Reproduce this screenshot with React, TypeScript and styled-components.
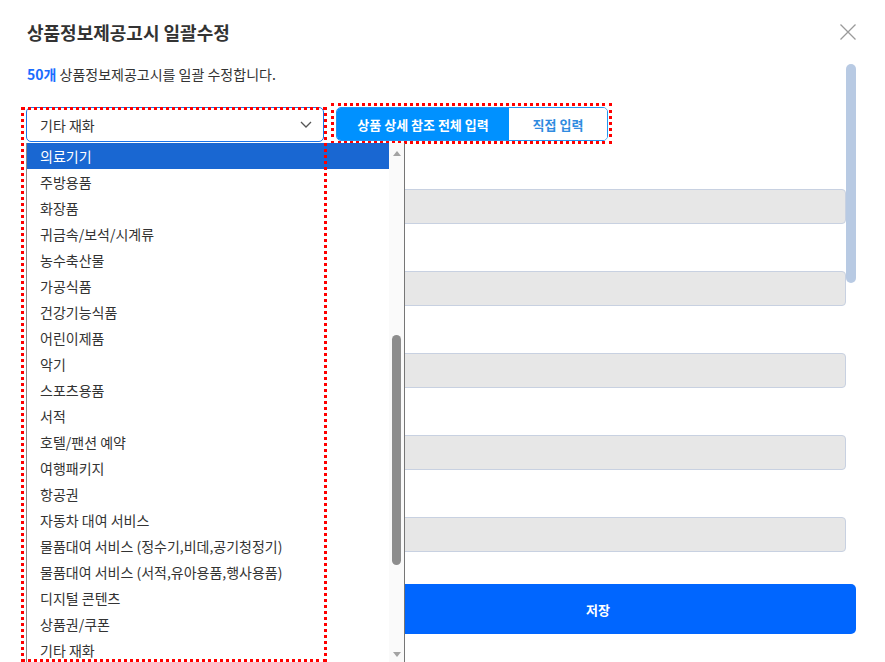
import React from "react";
import styled, { createGlobalStyle } from "styled-components";

const GlobalStyle = createGlobalStyle`
  html, body { margin: 0; padding: 0; background: #fff; }
  body { font-family: "Noto Sans CJK KR", "Noto Sans", sans-serif; color: #333; }
  * { box-sizing: border-box; }
`;

const Modal = styled.div`
  position: relative;
  width: 885px;
  height: 662px;
  overflow: hidden;
  padding: 20px 29px 0 26px;
  background: #fff;
`;

const Header = styled.div`
  display: flex;
  justify-content: space-between;
  align-items: center;
  height: 24px;
`;

const Title = styled.h2`
  margin: 0 0 0 1px;
  font-size: 18px;
  line-height: 24px;
  font-weight: 700;
  color: #333;
`;

const CloseButton = styled.button`
  display: flex;
  padding: 0;
  border: 0;
  background: none;
  cursor: pointer;
`;

const Subtitle = styled.p`
  margin: 20px 0 0 1px;
  font-size: 14px;
  line-height: 20px;
  color: #333;
`;

const Count = styled.strong`
  color: #1a6dff;
  font-weight: 700;
`;

const ControlRow = styled.div`
  display: flex;
  align-items: flex-start;
  gap: 7px;
  margin-top: 19px;
`;

const SelectWrap = styled.div`
  position: relative;
  width: 298px;
  margin-top: 4px;
`;

const SelectBox = styled.div`
  display: flex;
  align-items: center;
  justify-content: space-between;
  height: 35px;
  padding: 0 11px 0 13px;
  border: 1px solid #1a73e8;
  border-radius: 5px;
  font-size: 14px;
  color: #333;
  background: #fff;
`;

const DropdownList = styled.div`
  position: absolute;
  top: 36px;
  left: 0;
  width: 379px;
  height: 520px;
  display: flex;
  background: #fff;
  border-left: 1px solid #8a8a8a;
  border-right: 1px solid #767676;
  z-index: 2;
`;

const Options = styled.ul`
  flex: 1;
  margin: 0;
  padding: 0;
  list-style: none;
`;

const Option = styled.li<{ $selected?: boolean }>`
  height: 26px;
  line-height: 26px;
  padding-left: 13px;
  font-size: 14px;
  white-space: nowrap;
  color: ${(p) => (p.$selected ? "#fff" : "#333")};
  background: ${(p) => (p.$selected ? "#1967d2" : "transparent")};
`;

const ScrollTrack = styled.div`
  width: 15px;
  display: flex;
  flex-direction: column;
  align-items: center;
  background: #fafafa;
  padding: 8px 0 6px;
`;

const ArrowUp = styled.span`
  width: 0;
  height: 0;
  border-left: 4.5px solid transparent;
  border-right: 4.5px solid transparent;
  border-bottom: 5px solid #a3a3a3;
`;

const ArrowDown = styled.span`
  width: 0;
  height: 0;
  margin-top: auto;
  border-left: 4.5px solid transparent;
  border-right: 4.5px solid transparent;
  border-top: 5px solid #a3a3a3;
`;

const Thumb = styled.span`
  width: 9px;
  height: 230px;
  margin-top: 179px;
  border-radius: 5px;
  background: #8d8d8d;
`;

const Highlight = styled.div`
  position: absolute;
  top: 0;
  left: -5px;
  width: 306px;
  height: 555px;
  border: 3px dotted #f00;
  pointer-events: none;
  z-index: 3;
`;

const ToggleHighlight = styled.div`
  border: 3px dotted #f00;
  padding: 1px 1px 0 2px;
`;

const ToggleGroup = styled.div`
  display: flex;
  height: 34px;
  border: 1px solid #2196f3;
  border-radius: 5px;
  overflow: hidden;
`;

const ToggleButton = styled.button<{ $active?: boolean; $w: number }>`
  width: ${(p) => p.$w}px;
  border: 0;
  padding: 0;
  font-family: inherit;
  font-size: 13px;
  font-weight: 700;
  color: ${(p) => (p.$active ? "#fff" : "#2f8be0")};
  background: ${(p) => (p.$active ? "#0091ff" : "#fff")};
  cursor: pointer;
`;

const FormArea = styled.div`
  display: flex;
  flex-direction: column;
  gap: 47px;
  margin: 45px 0 0 314px;
`;

const Field = styled.div`
  width: calc(100% - 10px);
  height: 35px;
  border: 1px solid #c8d1e1;
  border-radius: 4px;
  background: #e7e7e7;
`;

const SaveButton = styled.button`
  height: 50px;
  margin-top: 32px;
  margin-left: 314px;
  width: calc(100% - 314px);
  border: 0;
  border-radius: 5px;
  background: #0066ff;
  color: #fff;
  font-family: inherit;
  font-size: 13px;
  font-weight: 700;
  cursor: pointer;
`;

const ModalScrollThumb = styled.div`
  position: absolute;
  top: 64px;
  right: 29px;
  width: 10px;
  height: 219px;
  border-radius: 5px;
  background: #b8cae3;
`;

const options = [
  "의료기기",
  "주방용품",
  "화장품",
  "귀금속/보석/시계류",
  "농수축산물",
  "가공식품",
  "건강기능식품",
  "어린이제품",
  "악기",
  "스포츠용품",
  "서적",
  "호텔/팬션 예약",
  "여행패키지",
  "항공권",
  "자동차 대여 서비스",
  "물품대여 서비스 (정수기,비데,공기청정기)",
  "물품대여 서비스 (서적,유아용품,행사용품)",
  "디지털 콘텐츠",
  "상품권/쿠폰",
  "기타 재화",
];

export default function App() {
  return (
    <>
      <GlobalStyle />
      <Modal>
        <Header>
          <Title>상품정보제공고시 일괄수정</Title>
          <CloseButton aria-label="close">
            <svg width="16" height="16" viewBox="0 0 16 16">
              <path d="M0.5 0.5 L15.5 15.5 M15.5 0.5 L0.5 15.5" stroke="#9a9a9a" strokeWidth="1.3" fill="none" />
            </svg>
          </CloseButton>
        </Header>
        <Subtitle>
          <Count>50개</Count> 상품정보제공고시를 일괄 수정합니다.
        </Subtitle>
        <ControlRow>
          <SelectWrap>
            <SelectBox>
              <span>기타 재화</span>
              <svg width="12" height="7" viewBox="0 0 12 7">
                <polyline points="1,1 6,6 11,1" stroke="#555" strokeWidth="1.3" fill="none" />
              </svg>
            </SelectBox>
            <DropdownList>
              <Options>
                {options.map((o, i) => (
                  <Option key={o} $selected={i === 0}>
                    {o}
                  </Option>
                ))}
              </Options>
              <ScrollTrack>
                <ArrowUp />
                <Thumb />
                <ArrowDown />
              </ScrollTrack>
            </DropdownList>
            <Highlight />
          </SelectWrap>
          <ToggleHighlight>
            <ToggleGroup>
              <ToggleButton $active $w={172}>상품 상세 참조 전체 입력</ToggleButton>
              <ToggleButton $w={98}>직접 입력</ToggleButton>
            </ToggleGroup>
          </ToggleHighlight>
        </ControlRow>
        <FormArea>
          {[0, 1, 2, 3, 4].map((i) => (
            <Field key={i} />
          ))}
        </FormArea>
        <SaveButton>저장</SaveButton>
        <ModalScrollThumb />
      </Modal>
    </>
  );
}
